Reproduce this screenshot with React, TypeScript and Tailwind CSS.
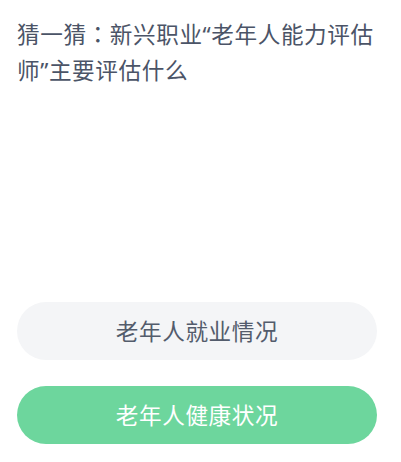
export default function App() {
  return (
    <div className="flex h-[462px] w-[401px] flex-col bg-white font-['Noto_Sans_CJK_SC',sans-serif]">
      <h1 className="px-[17px] pt-[16px] text-[22.6px] font-normal leading-[35px] tracking-[0.6px] text-[#4b5467]">
        猜一猜
        <span className="font-['Noto_Sans_CJK_TC',sans-serif]">：</span>
        新兴职业
        <span className="font-['Noto_Sans',sans-serif]">“</span>
        老年人能力评估师
        <span className="font-['Noto_Sans',sans-serif]">”</span>
        主要评估什么
      </h1>

      <div className="mt-auto flex flex-col gap-[26px] px-[17px] pb-[18px]">
        <button className="flex h-[58px] w-[360px] items-center justify-center rounded-full bg-[#f4f5f7] text-[22.6px] tracking-[0.6px] text-[#535c6c]">
          老年人就业情况
        </button>
        <button className="flex h-[58px] w-[360px] items-center justify-center rounded-full bg-[#6dd69d] text-[22.6px] tracking-[0.6px] text-white">
          老年人健康状况
        </button>
      </div>
    </div>
  )
}
